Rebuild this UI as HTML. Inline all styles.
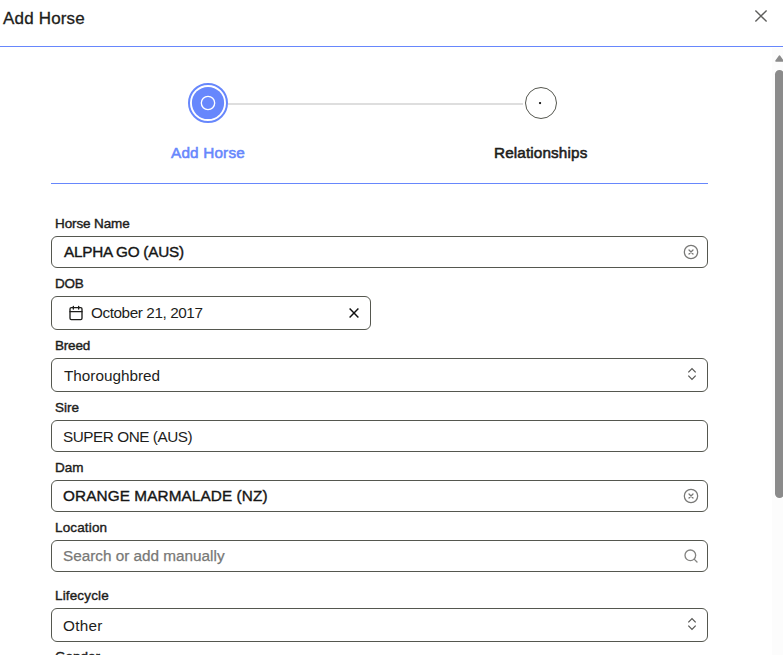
<!DOCTYPE html>
<html lang="en">
<head>
<meta charset="utf-8">
<title>Add Horse</title>
<style>
  html, body { margin: 0; padding: 0; background: #fff; }
  body {
    width: 783px; height: 655px; overflow: hidden; position: relative;
    font-family: "Liberation Sans", sans-serif; color: #1d1d1b;
  }
  .modal { position: absolute; left: 0; top: 0; width: 783px; height: 655px; overflow: hidden; background: #fff; }
  .modal-header { position: absolute; left: 0; top: 0; width: 783px; height: 46px; border-bottom: 1px solid #6787fc; box-sizing: content-box; }
  .modal-title { position: absolute; left: 3px; top: 9px; margin: 0; font-size: 17px; line-height: 20px; font-weight: 400; letter-spacing: 0.18px; color: #1d1d1b; -webkit-text-stroke: 0.3px #1d1d1b; white-space: nowrap; }
  .close-btn { position: absolute; left: 752px; top: 7px; width: 18px; height: 18px; padding: 0; border: 0; background: none; }
  .close-btn svg { display: block; }

  .modal-body { position: absolute; left: 0; top: 47px; width: 772px; height: 608px; overflow: hidden; }

  /* stepper */
  .stepper { position: absolute; left: 51px; top: 0; width: 657px; height: 136px; border-bottom: 1px solid #6787fc; }
  .step-line { position: absolute; left: 177px; top: 56px; width: 295px; height: 2px; background: #dedede; }
  .step { position: absolute; top: 0; text-align: center; }
  .step-label { position: absolute; white-space: nowrap; font-size: 15.3px; line-height: 18px; font-weight: 400; -webkit-text-stroke: 0.55px currentColor; }
  .step-icon { position: absolute; }

  /* form */
  .field-label { position: absolute; left: 55px; font-size: 13.5px; line-height: 16px; color: #1d1d1b; -webkit-text-stroke: 0.4px #1d1d1b; white-space: nowrap; }
  .control { position: absolute; left: 51px; width: 657px; height: 32px; box-sizing: border-box; border: 1px solid #55574f; border-radius: 6px; background: #fff; }
  .control.select { height: 34px; }
  .control .value { position: absolute; left: 12px; top: 5px; line-height: 20px; font-size: 15.3px; white-space: nowrap; color: #1d1d1b; }
  .control.select .value { top: 7px; }
  .control .value.medium { color:#161615; -webkit-text-stroke: 0.38px #161615; }
  .control .value.placeholder { color: #787876; -webkit-text-stroke: 0.25px #787876; }
  .control .icon { position: absolute; }
</style>
</head>
<body>
<div class="modal">
  <div class="modal-header">
    <h2 class="modal-title">Add Horse</h2>
    <button class="close-btn" aria-label="Close">
      <svg width="18" height="18" viewBox="0 0 18 18"><path d="M3.4 3.4 L14.6 14.6 M14.6 3.4 L3.4 14.6" stroke="#5e5e5c" stroke-width="1.35" fill="none"/></svg>
    </button>
  </div>

  <div class="modal-body">
    <div class="stepper">
      <div class="step-line"></div>
      <svg class="step-icon" style="left:137px; top:36px" width="40" height="40" viewBox="0 0 40 40">
        <circle cx="20" cy="20" r="19" fill="#fff" stroke="#6787fc" stroke-width="2"/>
        <circle cx="20" cy="20" r="16.1" fill="#6787fc"/>
        <circle cx="20" cy="20" r="6.67" fill="none" stroke="#fff" stroke-width="1.35"/>
      </svg>
      <div class="step-label" style="left:120px; top:97px; color:#6787fc; letter-spacing:0.18px;">Add Horse</div>
      <svg class="step-icon" style="left:474px; top:40px" width="32" height="32" viewBox="0 0 32 32">
        <circle cx="16" cy="16" r="15.5" fill="#fff" stroke="#55574f" stroke-width="1"/>
        <circle cx="15.05" cy="16.05" r="1.15" fill="#111"/>
      </svg>
      <div class="step-label" style="left:443px; top:97px; color:#1d1d1b; letter-spacing:0.12px;">Relationships</div>
    </div>

    <form>
      <label class="field-label" style="top:169px; letter-spacing:-0.12px">Horse Name</label>
      <div class="control" style="top:189px">
        <span class="value medium" style="letter-spacing:-0.25px">ALPHA GO (AUS)</span>
        <svg class="icon" style="left:631px; top:7px" width="16" height="16" viewBox="0 0 24 24" fill="none" stroke="#787876" stroke-width="1.9" stroke-linecap="round"><circle cx="12" cy="12" r="10"/><path d="m15 9-6 6M9 9l6 6"/></svg>
      </div>

      <label class="field-label" style="top:229px; letter-spacing:-0.3px">DOB</label>
      <div class="control select" style="top:249px; width:320px;">
        <svg class="icon" style="left:16px; top:8px" width="16" height="16" viewBox="0 0 24 24" fill="none" stroke="#1d1d1b" stroke-width="2" stroke-linecap="round" stroke-linejoin="round"><path d="M8 2v4M16 2v4"/><rect width="18" height="18" x="3" y="4" rx="2"/><path d="M3 10h18"/></svg>
        <span class="value" style="left:39px; top:6px; letter-spacing:-0.42px">October 21, 2017</span>
        <svg class="icon" style="left:294px; top:8px" width="16" height="16" viewBox="0 0 24 24" fill="none" stroke="#111" stroke-width="2.2" stroke-linecap="butt"><path d="M18.6 5.4 5.4 18.6M5.4 5.4l13.2 13.2"/></svg>
      </div>

      <label class="field-label" style="top:291px; letter-spacing:-0.2px">Breed</label>
      <div class="control select" style="top:311px">
        <span class="value">Thoroughbred</span>
        <svg class="icon" style="left:632px; top:7px" width="16" height="16" viewBox="0 0 24 24" fill="none" stroke="#555553" stroke-width="1.8"><path d="M6.5 14.4 12 20l5.500-5.600M6.500 9.600 12 4l5.500 5.600"/></svg>
      </div>

      <label class="field-label" style="top:353px">Sire</label>
      <div class="control" style="top:373px">
        <span class="value" style="left:11px; top:6px; letter-spacing:-0.46px">SUPER ONE (AUS)</span>
      </div>

      <label class="field-label" style="top:413px">Dam</label>
      <div class="control" style="top:433px">
        <span class="value medium" style="left:11px; letter-spacing:0.11px">ORANGE MARMALADE (NZ)</span>
        <svg class="icon" style="left:631px; top:7px" width="16" height="16" viewBox="0 0 24 24" fill="none" stroke="#787876" stroke-width="1.9" stroke-linecap="round"><circle cx="12" cy="12" r="10"/><path d="m15 9-6 6M9 9l6 6"/></svg>
      </div>

      <label class="field-label" style="top:473px; letter-spacing:0.15px">Location</label>
      <div class="control" style="top:493px">
        <span class="value placeholder" style="left:11px;">Search or add manually</span>
        <svg class="icon" style="left:631px; top:7px" width="16" height="16" viewBox="0 0 24 24" fill="none" stroke="#838381" stroke-width="2" stroke-linecap="round"><circle cx="11" cy="11" r="8"/><path d="m21 21-4.3-4.3"/></svg>
      </div>

      <label class="field-label" style="top:541px; letter-spacing:0.15px">Lifecycle</label>
      <div class="control select" style="top:561px">
        <span class="value" style="left:11px; letter-spacing:0.3px">Other</span>
        <svg class="icon" style="left:632px; top:7px" width="16" height="16" viewBox="0 0 24 24" fill="none" stroke="#555553" stroke-width="1.8"><path d="M6.5 14.4 12 20l5.500-5.600M6.500 9.600 12 4l5.500 5.600"/></svg>
      </div>

      <label class="field-label" style="top:602px">Gender</label>
    </form>
  </div>

  <!-- scrollbar -->
  <div class="scrollbar" style="position:absolute; left:772px; top:48px; width:15px; height:607px; background:#fcfcfc;">
    <svg style="position:absolute; left:3px; top:7px" width="9" height="7" viewBox="0 0 9 7"><path d="M4.5 1 L8.1 6 H0.9 Z" fill="#8b8b8b" stroke="#8b8b8b" stroke-width="1.3" stroke-linejoin="round"/></svg>
    <div style="position:absolute; left:3px; top:22px; width:9px; height:428px; border-radius:4.5px; background:#8b8b8b;"></div>
  </div>
</div>
</body>
</html>
